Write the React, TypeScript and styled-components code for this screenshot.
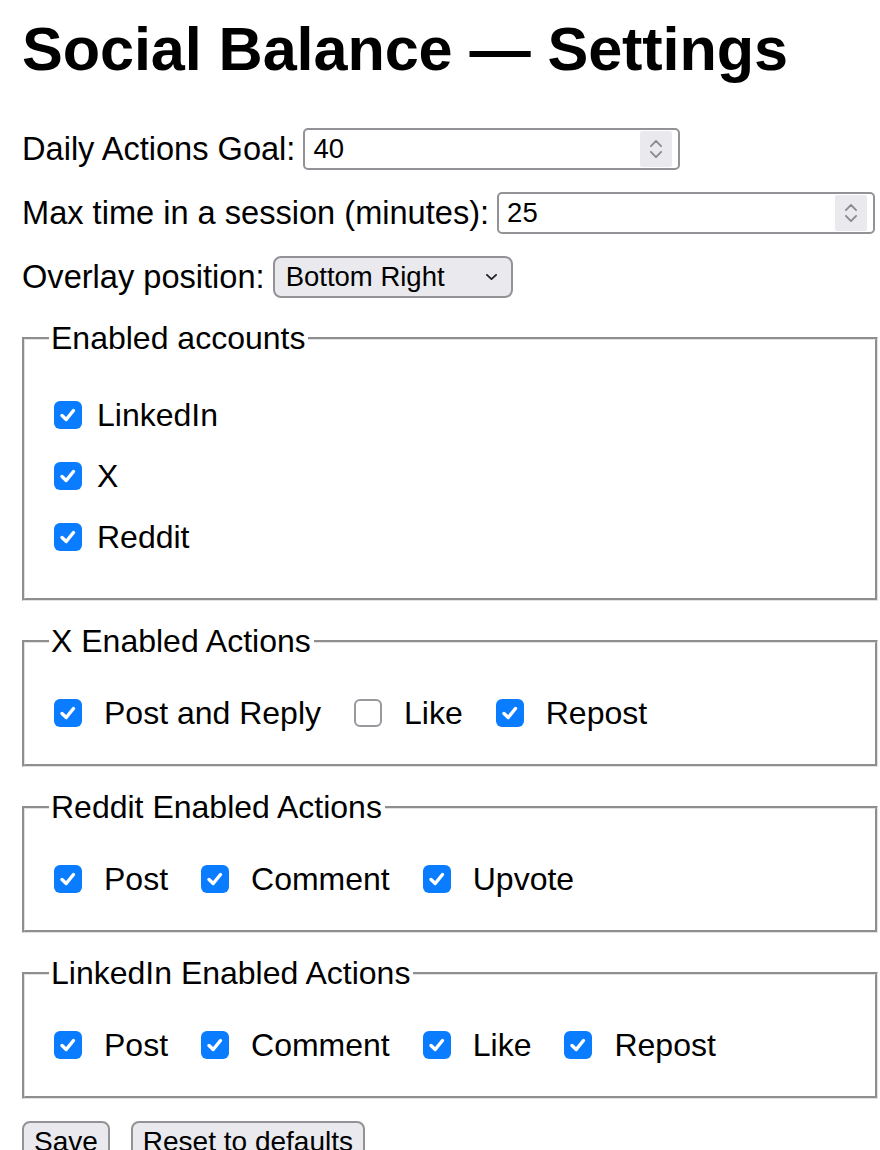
import React from "react";
import styled, { createGlobalStyle } from "styled-components";

const GlobalStyle = createGlobalStyle`
  html, body { margin: 0; padding: 0; background: #ffffff; }
  body {
    font-family: "Liberation Sans", Arial, Helvetica, sans-serif;
    color: #000000;
    font-size: 32.6px;
  }
  * { box-sizing: border-box; }
`;

const Page = styled.div`
  padding: 18px 2px 0 22px;
  display: flex;
  flex-direction: column;
`;

const Title = styled.h1`
  margin: 0 0 48px 0;
  font-size: 61.2px;
  line-height: 62px;
  font-weight: 700;
  letter-spacing: -0.1px;
`;

const Form = styled.div`
  display: flex;
  flex-direction: column;
  gap: 22px;
`;

const FieldRow = styled.div`
  display: flex;
  align-items: center;
  gap: 8px;
  height: 42px;
`;

const FieldLabel = styled.span`
  font-size: 32.6px;
  line-height: 36px;
  white-space: nowrap;
`;

const NumberBox = styled.div<{ $width: number }>`
  width: ${(p) => p.$width}px;
  height: 42px;
  border: 2px solid #939397;
  border-radius: 5px;
  background: #ffffff;
  display: flex;
  align-items: center;
  padding: 0 6px 0 8px;
`;

const NumberInput = styled.input`
  flex: 1;
  min-width: 0;
  border: none;
  outline: none;
  background: transparent;
  padding: 0;
  font-family: "Liberation Sans", Arial, sans-serif;
  font-size: 27.5px;
  color: #000;
`;

const Spinner = styled.div`
  width: 32px;
  height: 36px;
  background: #e9e9ee;
  border-radius: 2px;
  display: flex;
  flex-direction: column;
  align-items: center;
  justify-content: center;
  gap: 4px;
`;

const SelectBox = styled.div`
  width: 240px;
  height: 42px;
  border: 2px solid #939397;
  border-radius: 8px;
  background: #e9e9ee;
  display: flex;
  align-items: center;
  justify-content: space-between;
  padding: 0 14px 0 11px;
  font-size: 27.5px;
  cursor: default;
`;

const Fieldset = styled.fieldset<{ $padTop: number; $padBottom: number }>`
  margin: 0;
  border: 3px groove #e2e2e2;
  padding: ${(p) => p.$padTop}px 0 ${(p) => p.$padBottom}px 24px;
  min-width: 0;
`;

const Legend = styled.legend`
  padding: 0 3px 0 2px;
  font-size: 32px;
  line-height: 36px;
`;

const AccountList = styled.div`
  display: flex;
  flex-direction: column;
  gap: 25px;
`;

const ActionRow = styled.div`
  display: flex;
  align-items: center;
  gap: 28px;
`;

const CheckItem = styled.label<{ $gap: number }>`
  display: flex;
  align-items: center;
  gap: ${(p) => p.$gap}px;
  height: 36px;
  font-size: 32px;
  line-height: 36px;
  white-space: nowrap;
`;

const Box = styled.span<{ $checked: boolean }>`
  width: 28px;
  height: 28px;
  margin-left: 5px;
  border-radius: 6px;
  flex: none;
  display: flex;
  align-items: center;
  justify-content: center;
  background: ${(p) => (p.$checked ? "#0a7cff" : "#ffffff")};
  border: ${(p) => (p.$checked ? "none" : "2px solid #98989d")};
`;

const Buttons = styled.div`
  display: flex;
  gap: 21px;
`;

const Button = styled.button`
  height: 42px;
  padding: 0 10px;
  border: 2px solid #939397;
  border-radius: 8px;
  background: #e9e9ee;
  font-family: "Liberation Sans", Arial, sans-serif;
  font-size: 28px;
  color: #000;
`;

const Chevron: React.FC<{ dir: "up" | "down"; color: string; w: number; h: number; sw: number }> = ({ dir, color, w, h, sw }) => (
  <svg width={w} height={h} viewBox={`0 0 ${w} ${h}`} fill="none">
    <polyline
      points={
        dir === "up"
          ? `${sw / 2},${h - sw / 2} ${w / 2},${sw / 2} ${w - sw / 2},${h - sw / 2}`
          : `${sw / 2},${sw / 2} ${w / 2},${h - sw / 2} ${w - sw / 2},${sw / 2}`
      }
      stroke={color}
      strokeWidth={sw}
      strokeLinecap="round"
      strokeLinejoin="round"
    />
  </svg>
);

const Check: React.FC<{ checked: boolean }> = ({ checked }) => (
  <Box $checked={checked}>
    {checked && (
      <svg width="22" height="22" viewBox="0 0 22 22" fill="none">
        <polyline points="5,11.5 9.2,15.5 16.5,6.5" stroke="#ffffff" strokeWidth="3.4" strokeLinecap="round" strokeLinejoin="round" />
      </svg>
    )}
  </Box>
);

const NumberField: React.FC<{ label: string; value: string; width: number }> = ({ label, value, width }) => (
  <FieldRow>
    <FieldLabel>{label}</FieldLabel>
    <NumberBox $width={width}>
      <NumberInput type="text" defaultValue={value} />
      <Spinner>
        <Chevron dir="up" color="#8a8a8f" w={12} h={7} sw={1.8} />
        <Chevron dir="down" color="#8a8a8f" w={12} h={7} sw={1.8} />
      </Spinner>
    </NumberBox>
  </FieldRow>
);

type Action = { label: string; checked: boolean };

const ActionGroup: React.FC<{ title: string; actions: Action[] }> = ({ title, actions }) => (
  <Fieldset $padTop={36} $padBottom={33}>
    <Legend>{title}</Legend>
    <ActionRow>
      {actions.map((a) => (
        <CheckItem key={a.label} $gap={22}>
          <Check checked={a.checked} />
          {a.label}
        </CheckItem>
      ))}
    </ActionRow>
  </Fieldset>
);

export default function App() {
  return (
    <>
      <GlobalStyle />
      <Page>
        <Title>Social Balance — Settings</Title>
        <Form>
          <NumberField label="Daily Actions Goal:" value="40" width={377} />
          <NumberField label="Max time in a session (minutes):" value="25" width={378} />
          <FieldRow>
            <FieldLabel>Overlay position:</FieldLabel>
            <SelectBox>
              <span>Bottom Right</span>
              <Chevron dir="down" color="#222" w={11} h={6} sw={1.8} />
            </SelectBox>
          </FieldRow>

          <Fieldset $padTop={41} $padBottom={43}>
            <Legend>Enabled accounts</Legend>
            <AccountList>
              {["LinkedIn", "X", "Reddit"].map((name) => (
                <CheckItem key={name} $gap={15}>
                  <Check checked={true} />
                  {name}
                </CheckItem>
              ))}
            </AccountList>
          </Fieldset>

          <ActionGroup
            title="X Enabled Actions"
            actions={[
              { label: "Post and Reply", checked: true },
              { label: "Like", checked: false },
              { label: "Repost", checked: true },
            ]}
          />
          <ActionGroup
            title="Reddit Enabled Actions"
            actions={[
              { label: "Post", checked: true },
              { label: "Comment", checked: true },
              { label: "Upvote", checked: true },
            ]}
          />
          <ActionGroup
            title="LinkedIn Enabled Actions"
            actions={[
              { label: "Post", checked: true },
              { label: "Comment", checked: true },
              { label: "Like", checked: true },
              { label: "Repost", checked: true },
            ]}
          />

          <Buttons>
            <Button type="button">Save</Button>
            <Button type="button">Reset to defaults</Button>
          </Buttons>
        </Form>
      </Page>
    </>
  );
}
